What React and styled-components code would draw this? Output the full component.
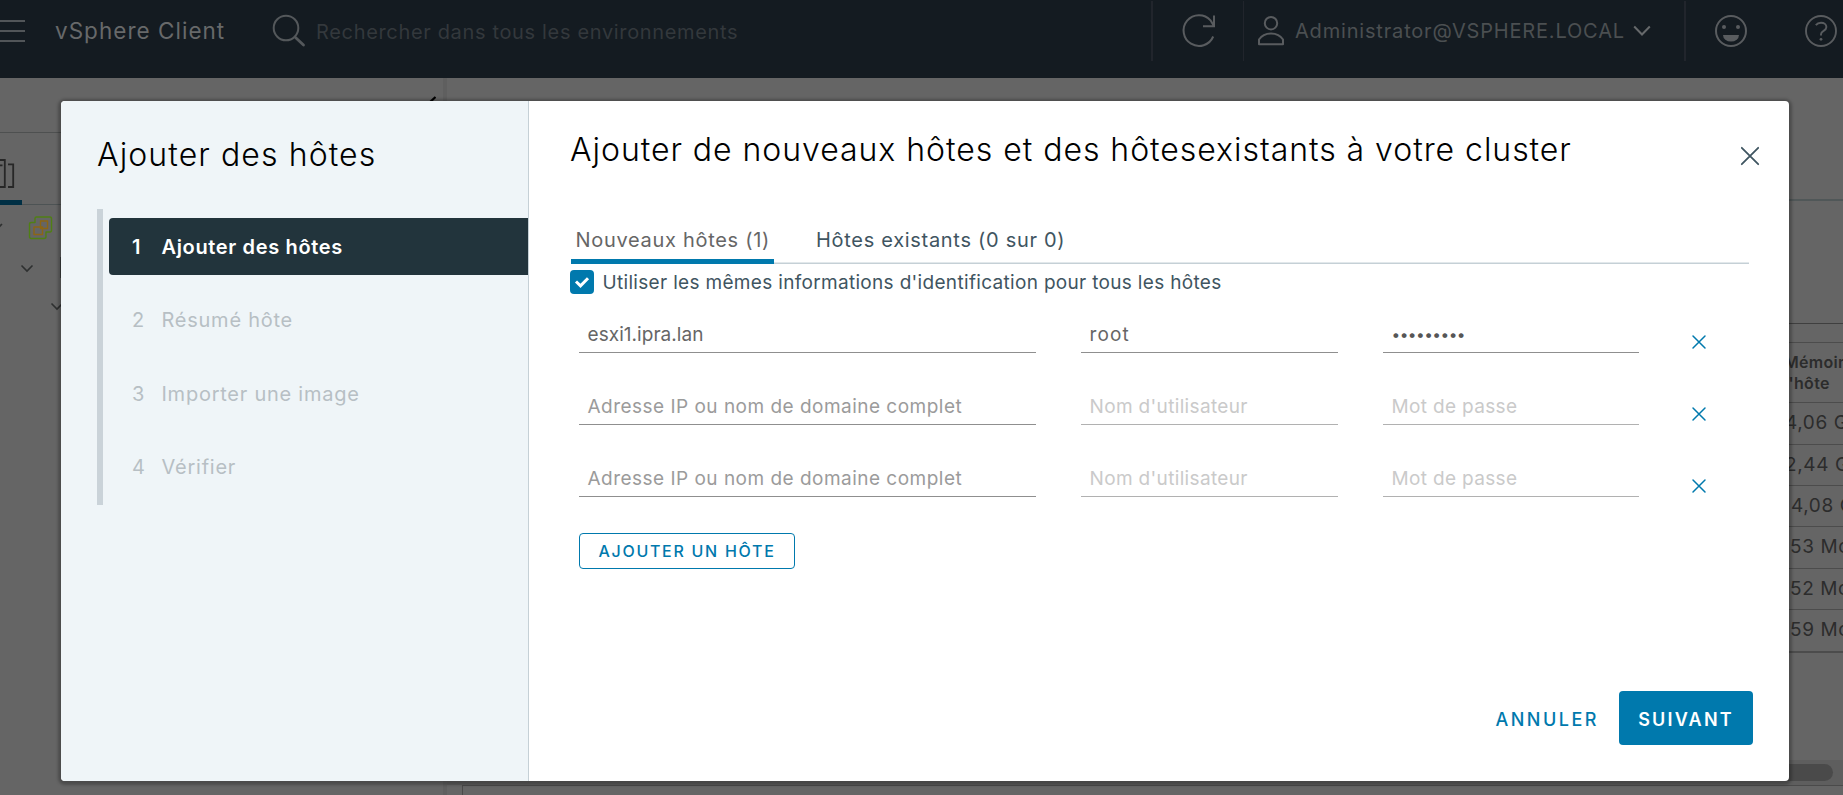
import React from 'react';
import styled, { createGlobalStyle, css } from 'styled-components';

const Global = createGlobalStyle`
  * { box-sizing: border-box; }
  body { margin: 0; overflow: hidden; background: #656565; font-family: Inter, "Noto Sans", sans-serif; }
  button { font-family: inherit; background: none; border: 0; padding: 0; }
`;

const Page = styled.div`
  position: relative;
  width: 1843px;
  height: 795px;
  overflow: hidden;
  display: flex;
  flex-direction: column;
  background: #656565;
`;

/* ---------- header ---------- */
const Header = styled.header`
  height: 78px;
  flex: none;
  display: flex;
  align-items: flex-start;
  background: #141b21;
  color: #595c5f;
  svg { display: block; flex: none; }
`;
const MenuIcon = styled.svg`margin-top: 18px;`;
const Brand = styled.div`
  width: 217px;
  padding-left: 29px;
  line-height: 62px;
  font-size: 22.5px;
  letter-spacing: 1.02px;
  color: #67696a;
`;
const SearchHint = styled.div`
  width: 845px;
  padding-left: 10px;
  line-height: 64px;
  font-size: 20px;
  letter-spacing: 0.66px;
  color: #33383c;
`;
const HeaderCell = styled.div`
  height: 60px;
  margin-top: 1px;
  width: ${p => p.$w}px;
  padding-left: ${p => p.$pad}px;
  border-left: ${p => p.$line || 0}px solid #21252c;
  display: flex;
  align-items: center;
`;
const UserName = styled.span`
  margin: 0 8px 0 10px;
  width: 330px;
  white-space: nowrap;
  font-size: 20px;
  letter-spacing: 0.82px;
  color: #4b4f51;
`;

/* ---------- background content ---------- */
const Content = styled.div`flex: 1; display: flex;`;
const Nav = styled.aside`flex: none; width: 443px; display: flex; flex-direction: column;`;
const NavTop = styled.div`
  height: 55px;
  border-bottom: 1px solid #4e5050;
  display: flex;
  justify-content: flex-end;
  padding: 18px 7px 0 0;
`;
const NavTabs = styled.div`
  height: 72px;
  border-bottom: 1px solid #4d5354;
  display: flex;
`;
const NavTab = styled.div`
  width: 22px;
  height: 72px;
  padding-top: 26px;
  border-bottom: 5px solid #002f44;
`;
const TreeLine = styled.div`
  height: ${p => p.$h}px;
  padding-left: ${p => p.$indent}px;
  display: flex;
  align-items: center;
  gap: ${p => p.$gap || 0}px;
`;
const Stub = styled.span`width: 2px; height: 21px; background: #3c3e3e;`;
const Splitter = styled.div`flex: none; width: 4px; background: #5f5f5f;`;
const Workspace = styled.main`
  flex: 1;
  min-width: 0;
  display: flex;
  flex-direction: column;
  overflow: hidden;
`;
const TitleArea = styled.div`height: 123px; border-bottom: 2px solid #505758;`;
const Table = styled.div`
  margin-top: 122px;
  border-top: 1px solid #3f3f3f;
  border-bottom: 2px solid #4c4c4c;
  color: #2c2c2c;
`;
const TableGap = styled.div`height: 19px; border-bottom: 1px solid #4c4c4c;`;
const TableHead = styled.div`
  height: 60px;
  padding: 9px 0 0 1337px;
  border-bottom: 1px solid #4c4c4c;
  font-size: 16px;
  font-weight: 600;
  line-height: 21px;
  letter-spacing: 0.3px;
  white-space: nowrap;
`;
const TableRow = styled.div`
  height: ${p => p.$h}px;
  padding-left: ${p => 1340 + p.$x}px;
  border-bottom: ${p => (p.$last ? 0 : 1)}px solid #4c4c4c;
  font-size: 19px;
  line-height: ${p => p.$h - 2}px;
  letter-spacing: 0.6px;
  white-space: nowrap;
`;
const ScrollTrack = styled.div`
  margin-top: 107px;
  height: 25px;
  background: #5e5e5e;
  padding: 4px 10px 0 0;
`;
const ScrollThumb = styled.div`height: 17px; border-radius: 9px; background: #4a4a4a;`;
const Recent = styled.div`flex: 1; margin-left: 15px; border: 1px solid #4a4a4a; border-width: 1px 0 0 1px;`;

/* ---------- dialog ---------- */
const Layer = styled.div`
  position: absolute;
  inset: 0;
  padding: 101px 54px 14px 61px;
  display: flex;
`;
const Dialog = styled.section`
  flex: 1;
  display: flex;
  background: #fff;
  border-radius: 4px;
  overflow: hidden;
  box-shadow: 0 1px 3px 3px rgba(0, 0, 0, 0.25);
`;
const Side = styled.div`
  width: 468px;
  padding: 34px 0 0 36px;
  background: #eff5f8;
  border-right: 1px solid #c5d0d6;
`;
const Heading = styled.h2`
  margin: 0;
  height: 40px;
  line-height: 40px;
  font-size: 32px;
  font-weight: 300;
  letter-spacing: ${p => p.$ls}px;
  white-space: nowrap;
  color: #000;
`;
const Steps = styled.ol`
  list-style: none;
  margin: 34px 0 0;
  padding: 9px 0 9px 6px;
  height: 296px;
  border-left: 6px solid #cad3d9;
  display: flex;
  flex-direction: column;
  justify-content: space-between;
`;
const Step = styled.li`
  height: 57px;
  padding-left: 23px;
  display: flex;
  align-items: center;
  font-size: 20px;
  font-weight: 400;
  letter-spacing: 0.75px;
  color: #b7bfc4;
  border-radius: 4px 0 0 4px;
  ${p => p.$active && css`
    background: #22343c;
    color: #fff;
    font-weight: 600;
    letter-spacing: 0.65px;
  `}
`;
const StepNo = styled.span`width: 29.5px;`;
const Main = styled.div`
  flex: 1;
  display: flex;
  flex-direction: column;
  padding: 29px 36px 36px 41px;
`;
const TitleBar = styled.div`display: flex; justify-content: space-between; height: 40px;`;
const CloseButton = styled.button`width: 20px; height: 20px; margin: 16px -7px 0 0; svg { display: block; }`;
const Tabs = styled.div`
  display: flex;
  height: 44px;
  margin: 50px 4px 0 1px;
  box-shadow: inset 0 -1px #c5d0d6, inset 0 -2px #e2e8eb;
`;
const Tab = styled.button`
  height: 44px;
  font-size: 20px;
  font-weight: 400;
  letter-spacing: 0.7px;
  color: #3f5561;
  white-space: nowrap;
  padding: 0 0 5px 42px;
  ${p => p.$active && css`
    width: 203px;
    padding: 0 0 0 4.5px;
    text-align: left;
    color: #666;
    border-bottom: 5px solid #0079ad;
  `}
`;
const CheckLine = styled.label`
  height: 24px;
  margin-top: 6px;
  display: flex;
  align-items: center;
  gap: 8.5px;
  font-size: 19px;
  font-weight: 400;
  letter-spacing: 0.32px;
  color: #3f5561;
`;
const CheckBox = styled.span`
  width: 24px;
  height: 24px;
  border-radius: 4px;
  background: #0079ad;
  svg { display: block; }
`;
const Hosts = styled.div`
  display: flex;
  flex-direction: column;
  gap: 36px;
  margin-top: 23px;
  padding-left: 9px;
`;
const HostRow = styled.div`
  display: grid;
  grid-template-columns: 457px 257px 256px 20px;
  column-gap: 45px;
  height: 36px;
`;
const Field = styled.div`
  height: 36px;
  border-bottom: 1px solid ${p => (p.$muted ? '#b1b1b1' : '#8f8f8f')};
  padding-left: 8.5px;
  line-height: 35px;
  font-size: 19px;
  font-weight: 400;
  letter-spacing: ${p => p.$ls}px;
  white-space: nowrap;
  color: ${p => p.$color};
`;
const Secret = styled(Field)`
  font-size: 15.5px;
  color: #565656;
`;
const RemoveButton = styled.button`width: 20px; height: 20px; margin: 15px 0 0 5px; svg { display: block; }`;
const AddButton = styled.button`
  width: 216px;
  height: 36px;
  margin: 36px 0 0 9px;
  padding-bottom: 1px;
  border: 1px solid #0079ad;
  border-radius: 4px;
  color: #0079ad;
  font-size: 16px;
  font-weight: 500;
  letter-spacing: 1.72px;
  white-space: nowrap;
`;
const Footer = styled.div`
  margin-top: auto;
  display: flex;
  justify-content: flex-end;
  align-items: center;
  gap: 20px;
`;
const Cancel = styled.button`
  padding-top: 2px;
  color: #0079ad;
  font-size: 18px;
  font-weight: 500;
  letter-spacing: 2.5px;
`;
const Next = styled.button`
  width: 134px;
  height: 54px;
  border-radius: 4px;
  background: #0079ad;
  color: #fff;
  font-size: 18px;
  font-weight: 600;
  letter-spacing: 2.2px;
  padding: 2px 0 0 0;
`;

const Cross = ({ size, color, width }) => (
  <svg width="20" height="20" viewBox="0 0 20 20" fill="none" stroke={color} strokeWidth={width} strokeLinecap="round">
    <path d={`M${10 - size} ${10 - size}L${10 + size} ${10 + size}M${10 + size} ${10 - size}L${10 - size} ${10 + size}`} />
  </svg>
);
const TreeChevron = () => (
  <svg width="14" height="10" viewBox="0 0 14 10" fill="none" stroke="#2e3030" strokeWidth="1.6">
    <path d="M1.5 2.500L7 8L12.5 2.500" />
  </svg>
);

const steps = ['Ajouter des hôtes', 'Résumé hôte', 'Importer une image', 'Vérifier'];
const hosts = [{ name: 'esxi1.ipra.lan', user: 'root', secret: '•••••••••' }, {}, {}];
const memory = [
  { text: '4,06 Go', x: -2, h: 42 },
  { text: '2,44 Go', x: -2, h: 41 },
  { text: '4,08 Go', x: 4, h: 41 },
  { text: '53 Mo', x: 3, h: 42 },
  { text: '52 Mo', x: 3, h: 41 },
  { text: '59 Mo', x: 3, h: 41 },
];

function TopBar() {
  return (
    <Header>
      <MenuIcon width="26" height="26" viewBox="0 0 26 26" stroke="#515558" strokeWidth="2">
        <path d="M0 3H25M0 13H25M0 23H25" />
      </MenuIcon>
      <Brand>vSphere Client</Brand>
      <svg width="63" height="62" viewBox="0 0 63 62" fill="none" stroke="#54585b">
        <circle cx="43" cy="28" r="12.3" strokeWidth="2" />
        <path d="M52.5 37.5L60.5 45" strokeWidth="2.8" strokeLinecap="round" />
      </svg>
      <SearchHint>Rechercher dans tous les environnements</SearchHint>
      <HeaderCell $w={92} $pad={27} $line={2}>
        <svg width="38" height="40" viewBox="0 0 38 40" fill="none" stroke="currentColor" strokeWidth="2">
          <path d="M33.2 25.5A15.4 15.4 0 1 1 30.5 9.3L33.5 14.3M34 4.5V15.3H23" />
        </svg>
      </HeaderCell>
      <HeaderCell $w={441} $pad={13} $line={1}>
        <svg width="28" height="32" viewBox="0 0 28 32" fill="none" stroke="currentColor" strokeWidth="2">
          <circle cx="14" cy="8.2" r="6.2" />
          <path d="M2 29.3V24.5C4.500 20.5 8.5 18.4 14 18.4S23.500 20.5 26 24.5V29.3Z" strokeLinejoin="round" />
        </svg>
        <UserName>Administrator@VSPHERE.LOCAL</UserName>
        <svg width="18" height="12" viewBox="0 0 18 12" fill="none" stroke="#66696b" strokeWidth="2">
          <path d="M1.2 1.500L9 9.500L16.8 1.500" />
        </svg>
      </HeaderCell>
      <HeaderCell $w={120} $pad={28} $line={2}>
        <svg width="34" height="34" viewBox="0 0 34 34" fill="none" stroke="currentColor" strokeWidth="2">
          <circle cx="17" cy="17" r="15" />
          <circle cx="10" cy="13" r="2" fill="currentColor" stroke="none" />
          <circle cx="24" cy="13" r="2" fill="currentColor" stroke="none" />
          <path d="M9 21H25A8 6.6 0 0 1 9 21Z" fill="currentColor" stroke="none" />
        </svg>
      </HeaderCell>
      <HeaderCell $w={39} $pad={0}>
        <svg width="34" height="34" viewBox="0 0 34 34" fill="none" stroke="currentColor" strokeWidth="1.9">
          <circle cx="17" cy="17" r="15" />
          <path d="M11.8 11.2C13.2 9.4 15 8.7 17 8.7C20.2 8.7 22.4 10.5 22.4 13C22.4 17.2 17 16.5 17 20.3V21.6" />
          <circle cx="17" cy="25.3" r="1.4" fill="currentColor" stroke="none" />
        </svg>
      </HeaderCell>
    </Header>
  );
}

function Background() {
  return (
    <Content>
      <Nav>
        <NavTop>
          <svg width="7" height="7" viewBox="0 0 7 7" fill="none" stroke="#000" strokeWidth="2.2">
            <path d="M6.5 1L0 7" />
          </svg>
        </NavTop>
        <NavTabs>
          <NavTab>
            <svg width="15" height="30" viewBox="0 0 15 30" fill="none" stroke="#272727" strokeWidth="1.8">
              <path d="M0 1H4.8V28H0M0 6.3H2.5M8 5.3H13.2V28H8" />
            </svg>
          </NavTab>
        </NavTabs>
        <TreeLine $h={44} $indent={0} $gap={24}>
          <svg width="3" height="10" viewBox="0 0 3 10" fill="none" stroke="#2e3030" strokeWidth="1.6">
            <path d="M-2 6L2 2" />
          </svg>
          <svg width="26" height="26" viewBox="0 0 26 26" fill="none" strokeWidth="1.4" strokeLinejoin="round">
            <path d="M9.500 3H23Q24.500 3 24.500 5V16Q24.500 18 23 18H19V22.500Q19 24.500 17 24.500H4.500Q2.500 24.500 2.500 22.500V10Q2.500 8.500 4.500 8.500H8V4.500Q8 3 9.500 3Z" stroke="#507f14" />
            <path d="M13.500 7H20.500V14.500H13.500ZM7 13H15.500V20.500H7Z" stroke="#8c6614" />
          </svg>
        </TreeLine>
        <TreeLine $h={37} $indent={20} $gap={26}><TreeChevron /><Stub /></TreeLine>
        <TreeLine $h={40} $indent={50}><TreeChevron /></TreeLine>
      </Nav>
      <Splitter />
      <Workspace>
        <TitleArea />
        <Table>
          <TableGap />
          <TableHead>Mémoire de<br />l'hôte</TableHead>
          {memory.map((m, i) => (
            <TableRow key={m.text} $x={m.x} $h={m.h} $last={i === memory.length - 1}>{m.text}</TableRow>
          ))}
        </Table>
        <ScrollTrack><ScrollThumb /></ScrollTrack>
        <Recent />
      </Workspace>
    </Content>
  );
}

function AddHostsDialog() {
  return (
    <Layer>
      <Dialog>
        <Side>
          <Heading $ls={1.1}>Ajouter des hôtes</Heading>
          <Steps>
            {steps.map((label, i) => (
              <Step key={label} $active={i === 0}><StepNo>{i + 1}</StepNo>{label}</Step>
            ))}
          </Steps>
        </Side>
        <Main>
          <TitleBar>
            <Heading $ls={0.96}>Ajouter de nouveaux hôtes et des hôtesexistants à votre cluster</Heading>
            <CloseButton aria-label="Fermer"><Cross size={8.2} color="#3f5561" width={1.8} /></CloseButton>
          </TitleBar>
          <Tabs>
            <Tab $active>Nouveaux hôtes (1)</Tab>
            <Tab>Hôtes existants (0 sur 0)</Tab>
          </Tabs>
          <CheckLine>
            <CheckBox>
              <svg width="24" height="24" viewBox="0 0 24 24" fill="none" stroke="#fff" strokeWidth="3">
                <path d="M6 11.500L10.500 15.800L18 8.300" />
              </svg>
            </CheckBox>
            Utiliser les mêmes informations d'identification pour tous les hôtes
          </CheckLine>
          <Hosts>
            {hosts.map((h, i) => (
              <HostRow key={i}>
                <Field $ls={h.name ? 0.05 : 0.48} $color={h.name ? '#666' : '#9b9b9b'}>
                  {h.name || 'Adresse IP ou nom de domaine complet'}
                </Field>
                <Field $ls={h.user ? 1.1 : 0.34} $muted={!h.user} $color={h.user ? '#666' : '#cacaca'}>
                  {h.user || "Nom d'utilisateur"}
                </Field>
                {h.secret
                  ? <Secret $ls={-0.55}>{h.secret}</Secret>
                  : <Field $ls={0.34} $muted $color="#cacaca">Mot de passe</Field>}
                <RemoveButton aria-label="Supprimer"><Cross size={6} color="#0079ad" width={1.5} /></RemoveButton>
              </HostRow>
            ))}
          </Hosts>
          <AddButton>AJOUTER UN HÔTE</AddButton>
          <Footer>
            <Cancel>ANNULER</Cancel>
            <Next>SUIVANT</Next>
          </Footer>
        </Main>
      </Dialog>
    </Layer>
  );
}

export default function App() {
  return (
    <Page>
      <Global />
      <TopBar />
      <Background />
      <AddHostsDialog />
    </Page>
  );
}
